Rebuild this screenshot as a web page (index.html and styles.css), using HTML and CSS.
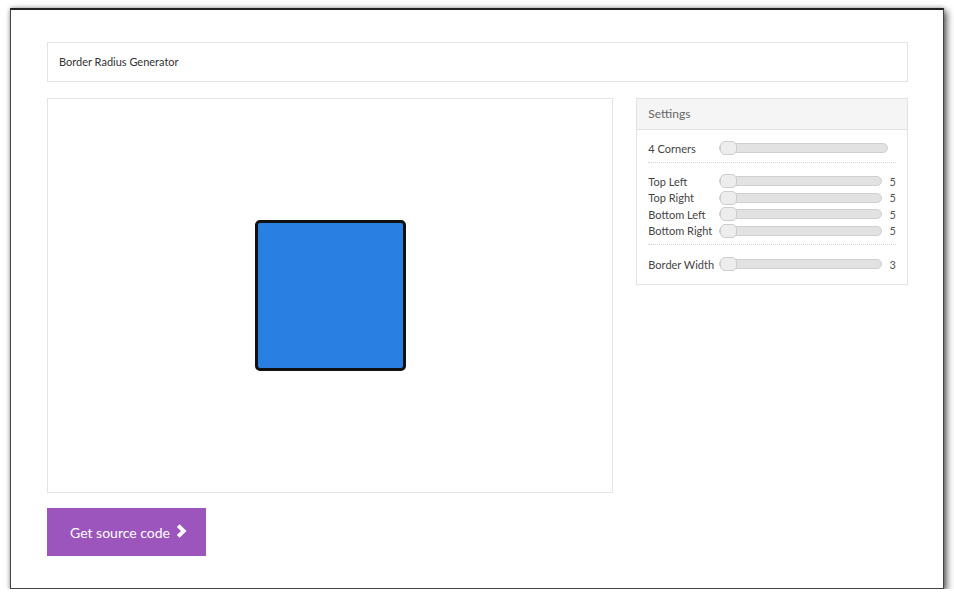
FILE: index.html
```html
<!DOCTYPE html>
<html lang="en">

<head>
    <meta charset="UTF-8">
    <meta name="viewport" content="width=device-width, initial-scale=1.0">
    <title>Border Radius Generator</title>

    <link rel="stylesheet" href="styles.css">
</head>

<body>
    <div class="window">
        <div class="title-box">Border Radius Generator</div>

        <div class="content">
            <div class="preview">
                <div class="shape"></div>
            </div>

            <div class="settings">
                <div class="settings-head">Settings</div>
                <div class="settings-body">
                    <div class="group first">
                        <div class="row">
                            <span class="label">4 Corners</span>
                            <div class="slider"><span class="thumb"></span></div>
                        </div>
                    </div>
                    <div class="group">
                        <div class="row">
                            <span class="label">Top Left</span>
                            <div class="slider"><span class="thumb"></span></div>
                            <span class="val">5</span>
                        </div>
                        <div class="row">
                            <span class="label">Top Right</span>
                            <div class="slider"><span class="thumb"></span></div>
                            <span class="val">5</span>
                        </div>
                        <div class="row">
                            <span class="label">Bottom Left</span>
                            <div class="slider"><span class="thumb"></span></div>
                            <span class="val">5</span>
                        </div>
                        <div class="row">
                            <span class="label">Bottom Right</span>
                            <div class="slider"><span class="thumb"></span></div>
                            <span class="val">5</span>
                        </div>
                    </div>
                    <div class="group last">
                        <div class="row">
                            <span class="label">Border Width</span>
                            <div class="slider"><span class="thumb"></span></div>
                            <span class="val">3</span>
                        </div>
                    </div>
                </div>
            </div>
        </div>

        <a href="javascript:;" class="btn">
            Get source code
            <svg class="chev" width="11" height="14" viewBox="0 0 11 14">
                <path d="M0.8 2.9 L3.6 0.2 L10.5 7 L3.6 13.8 L0.8 11.1 L5 7 Z" fill="#fff" />
            </svg>
        </a>
    </div>
</body>

</html>
```

FILE: styles.css
```css
* {
    margin: 0;
    padding: 0;
    box-sizing: border-box;
}

body {
    background-color: #fff;
    font-family: Lato, "Open Sans", sans-serif;
    color: #444;
}

.window {
    margin: 8px 0 0 10px;
    width: 934px;
    height: 581px;
    background-color: #fff;
    border: 1px solid #444;
    border-top: 2px solid #222;
    box-shadow: 3px 3px 7px rgba(0, 0, 0, 0.6), 0 0 4px rgba(0, 0, 0, 0.3);
    padding: 32px 35px 0 36px;
}

.title-box {
    height: 40px;
    border: 1px solid #e3e3e3;
    font-size: 11px;
    line-height: 38px;
    padding-left: 11px;
    color: #333;
}

.content {
    display: flex;
    gap: 23px;
    margin-top: 16px;
}

.preview {
    width: 567px;
    height: 395px;
    border: 1px solid #e3e3e3;
    display: flex;
    align-items: center;
    justify-content: center;
}

.shape {
    width: 151px;
    height: 151px;
    background-color: #2a7fe2;
    border: 3px solid #111;
    border-radius: 5px;
    margin-top: -1px;
}

.settings {
    width: 272px;
    height: 187px;
    border: 1px solid #e3e3e3;
}

.settings-head {
    height: 31px;
    background-color: #f5f5f5;
    border-bottom: 1px solid #e3e3e3;
    font-size: 12px;
    line-height: 30px;
    padding-left: 11px;
    color: #666;
}

.settings-body {
    padding: 0 11px;
}

.group {
    padding: 10px 0 5px;
    border-bottom: 1px dotted #d5d5d5;
}

.group.first {
    padding: 7px 0 3px;
}

.group.first .row {
    height: 22px;
}

.group.first .slider {
    margin-right: 8px;
}

.group.last {
    border-bottom: none;
    padding: 11px 0 0;
}

.row {
    display: flex;
    align-items: center;
    height: 16.5px;
    font-size: 11px;
}

.label {
    width: 71px;
    flex-shrink: 0;
}

.slider {
    position: relative;
    flex: 1;
    height: 10px;
    background-color: #e2e2e2;
    border: 1px solid #cfcfcf;
    border-radius: 5px;
}

.thumb {
    position: absolute;
    left: 0;
    top: -3px;
    width: 17px;
    height: 14px;
    background-color: #ededed;
    border: 1px solid #cdcdcd;
    border-radius: 5px;
}

.val {
    width: 14px;
    text-align: right;
    color: #555;
}

.btn {
    display: inline-flex;
    align-items: center;
    gap: 6px;
    margin-top: 15px;
    width: 159px;
    height: 48px;
    padding-left: 23px;
    background-color: #9b55bc;
    color: #fff;
    font-size: 14px;
    text-decoration: none;
}

.chev {
    display: block;
    margin-top: -2px;
}
```
